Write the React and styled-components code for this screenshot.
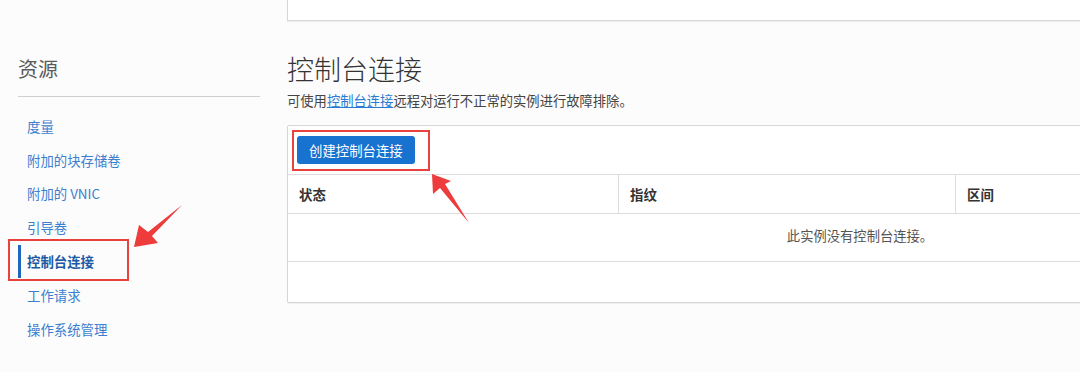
import React from "react";
import styled, { createGlobalStyle, css } from "styled-components";

const Global = createGlobalStyle`
  html, body { margin: 0; padding: 0; }
  body {
    background: #fcfcfc;
    font-family: "Noto Sans CJK SC", "Noto Sans", "Liberation Sans", sans-serif;
    overflow: hidden;
  }
`;

const Page = styled.div`
  position: relative;
  width: 1080px;
  height: 372px;
  overflow: hidden;
  display: flex;
  align-items: flex-start;
`;

const Sidebar = styled.nav`
  flex: 0 0 242px;
  margin-left: 18px;
  padding-top: 55px;
`;

const SideTitle = styled.h2`
  margin: 0;
  font-size: 20px;
  line-height: 28px;
  font-weight: 400;
  color: #5a5a5a;
  padding-bottom: 13px;
  border-bottom: 1px solid #cfcfcf;
`;

const NavList = styled.ul`
  list-style: none;
  margin: 12px 0 0;
  padding: 0;
`;

const NavItem = styled.li`
  position: relative;
  height: 33.8px;
  display: flex;
  align-items: center;
  padding-left: 9px;
  font-size: 13.4px;
  color: #3b7fd0;
  ${(p) =>
    p.$active &&
    css`
      font-weight: 700;
      color: #1d5aa6;
      &::before {
        content: "";
        position: absolute;
        left: 0;
        top: 1px;
        bottom: 0;
        width: 3px;
        background: #1f66be;
      }
      &::after {
        content: "";
        position: absolute;
        left: -10px;
        top: -5px;
        width: 117px;
        height: 38px;
        border: 2px solid #e8423f;
      }
    `}
`;

const Main = styled.main`
  flex: 0 0 1146px;
  margin-left: 27px;
`;

const TopBox = styled.div`
  height: 20px;
  background: #fff;
  border: 1px solid #d6d6d6;
  border-top: none;
  box-shadow: 0 1px 1px rgba(0, 0, 0, 0.05);
`;

const Title = styled.h1`
  margin: 30px 0 5px;
  font-size: 27px;
  line-height: 35px;
  font-weight: 300;
  color: #333;
`;

const Desc = styled.p`
  margin: 0 0 14px;
  font-size: 13.3px;
  line-height: 20px;
  color: #444;
`;

const Link = styled.a`
  color: #2b7bd3;
  text-decoration: underline;
`;

const Panel = styled.section`
  background: #fff;
  border: 1px solid #d6d6d6;
  border-radius: 2px;
  box-shadow: 0 1px 1px rgba(0, 0, 0, 0.05);
`;

const Toolbar = styled.div`
  padding: 10px 9px 10px;
  display: flex;
`;

const Annotated = styled.div`
  position: relative;
  display: inline-flex;
  &::after {
    content: "";
    position: absolute;
    left: -5px;
    top: -6px;
    width: 134px;
    height: 37px;
    border: 2px solid #e8423f;
  }
`;

const Button = styled.button`
  height: 28px;
  padding: 0 12px;
  border: none;
  border-radius: 3px;
  background: #1872d0;
  color: #fff;
  font-family: inherit;
  font-size: 13.4px;
`;

const Table = styled.div`
  display: grid;
  grid-template-columns: 330px 337px 1fr;
`;

const HeadCell = styled.div`
  height: 38px;
  display: flex;
  align-items: center;
  padding-left: 11px;
  font-size: 13.4px;
  font-weight: 700;
  color: #333;
  border-top: 1px solid #dcdcdc;
  border-bottom: 1px solid #dcdcdc;
  ${(p) => p.$divider && css`border-left: 1px solid #dcdcdc;`}
`;

const EmptyRow = styled.div`
  grid-column: 1 / -1;
  height: 48px;
  display: flex;
  align-items: center;
  justify-content: center;
  font-size: 13.3px;
  color: #555;
  padding-bottom: 4px;
  box-sizing: border-box;
  border-bottom: 1px solid #dcdcdc;
`;

const FooterRow = styled.div`
  grid-column: 1 / -1;
  height: 40px;
`;

const Overlay = styled.svg`
  position: absolute;
  left: 0;
  top: 0;
  pointer-events: none;
`;

const navItems = [
  "度量",
  "附加的块存储卷",
  "附加的 VNIC",
  "引导卷",
  "控制台连接",
  "工作请求",
  "操作系统管理",
];

export default function App() {
  return (
    <>
      <Global />
      <Page>
        <Sidebar>
          <SideTitle>资源</SideTitle>
          <NavList>
            {navItems.map((t) => (
              <NavItem key={t} $active={t === "控制台连接"}>
                {t}
              </NavItem>
            ))}
          </NavList>
        </Sidebar>
        <Main>
          <TopBox />
          <Title>控制台连接</Title>
          <Desc>
            可使用<Link>控制台连接</Link>远程对运行不正常的实例进行故障排除。
          </Desc>
          <Panel>
            <Toolbar>
              <Annotated>
                <Button>创建控制台连接</Button>
              </Annotated>
            </Toolbar>
            <Table>
              <HeadCell>状态</HeadCell>
              <HeadCell $divider>指纹</HeadCell>
              <HeadCell $divider>区间</HeadCell>
              <EmptyRow>此实例没有控制台连接。</EmptyRow>
              <FooterRow />
            </Table>
          </Panel>
        </Main>
        <Overlay width="1080" height="372" viewBox="0 0 1080 372">
          <polygon
            points="134,247 139,225 148,232 182,205 152,236 158,243"
            fill="#ee3b3b"
          />
          <polygon
            points="432,174 433,194 440,188 469,223 445,184 451,181"
            fill="#ee3b3b"
          />
        </Overlay>
      </Page>
    </>
  );
}
